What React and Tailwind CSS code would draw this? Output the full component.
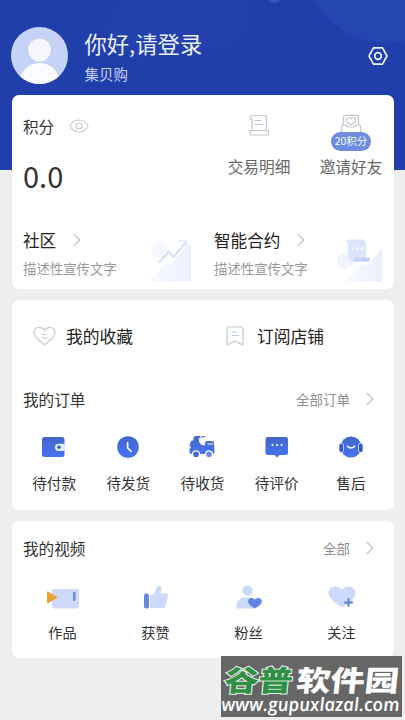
const wallet = (
  <svg width="26" height="24" viewBox="0 0 26 24">
    <rect x="1" y="2" width="22.5" height="20" rx="2.5" fill="url(#blue)" />
    <rect x="14" y="8.7" width="11" height="7.2" rx="3.6" fill="#e3ebff" />
    <circle cx="18" cy="12.3" r="1.7" fill="#3157d2" />
  </svg>
)

const clock = (
  <svg width="26" height="24" viewBox="0 0 26 24">
    <circle cx="13" cy="12" r="10.8" fill="url(#blue)" />
    <path d="M12.6 7.5v5.4l3.6 3.4" fill="none" stroke="#eef3ff" strokeWidth="1.7" strokeLinecap="round" strokeLinejoin="round" />
  </svg>
)

const truck = (
  <svg width="28" height="24" viewBox="0 0 28 24">
    <path d="M2.5 7.5a2 2 0 0 1 2-2h1V3.500A2.500 2.500 0 0 1 8 1h4l3 9.500 2-.5V8a2 2 0 0 1 2-2h5a2 2 0 0 1 2 2l.5 9a2 2 0 0 1-2 2H3.500a2 2 0 0 1-2-2v-3l1.500-1.500-1.500-1.800z" fill="url(#blue)" />
    <path d="M10.500 3c.3 3.500 1.500 6.500 3.800 7.200C16 8.500 16 5 16 2.200z" fill="#f3f6ff" />
    <path d="M13 1.700h4.200" stroke="#5f82e4" strokeWidth="1.300" />
    <path d="M19.500 9h5.700" stroke="#dbe5ff" strokeWidth="1.300" />
    <circle cx="8" cy="19.300" r="3.500" fill="#4268df" stroke="#fff" strokeWidth="1.300" />
    <circle cx="21" cy="19.300" r="3.500" fill="#6c8cea" stroke="#fff" strokeWidth="1.300" />
  </svg>
)

const message = (
  <svg width="26" height="24" viewBox="0 0 26 24">
    <path d="M4 2h17.500A2.500 2.500 0 0 1 24 4.500v13a2.500 2.500 0 0 1-2.500 2.500h-6L13 22.500 10.500 20H4a2.500 2.500 0 0 1-2.500-2.500v-13A2.500 2.500 0 0 1 4 2z" fill="url(#blue)" />
    <g fill="#eef3ff">
      <circle cx="8.500" cy="10" r="1.100" />
      <circle cx="13" cy="10" r="1.100" />
      <circle cx="17.500" cy="10" r="1.100" />
    </g>
  </svg>
)

const service = (
  <svg width="26" height="24" viewBox="0 0 26 24">
    <circle cx="13" cy="12" r="10.500" fill="url(#blue)" />
    <rect x="1" y="8.300" width="4.500" height="9" rx="2" fill="#3157cc" stroke="#e5ecff" strokeWidth=".8" />
    <rect x="20.500" y="8.300" width="4.500" height="9" rx="2" fill="#3157cc" stroke="#e5ecff" strokeWidth=".8" />
    <path d="M9.500 11.200c1.500 2.300 5.500 2.300 7 0" fill="none" stroke="#e5ecff" strokeWidth="1.700" strokeLinecap="round" />
  </svg>
)

const works = (
  <svg width="34" height="26" viewBox="0 0 34 26">
    <rect x="6" y="5" width="27" height="19.500" rx="2" fill="#cdd9fa" />
    <rect x="27" y="8" width="2.500" height="9" rx="1" fill="#6b8add" />
    <path d="M1.500 7.800l9.500 5.600-9.500 5.600z" fill="#eba030" stroke="#eba030" strokeLinejoin="round" />
  </svg>
)

const like = (
  <svg width="26" height="26" viewBox="0 0 26 26">
    <rect x="1" y="9.500" width="5" height="15" rx="2" fill="#6b87dc" />
    <path d="M7 11.500c3-.8 5-3 6.200-6.800C14 1 18.500 1.200 18.400 5c0 1.800-.5 3-1 4.500h5.500c1.700 0 2.200 1.200 1.900 2.500l-2.200 10c-.4 1.500-1.200 2-2.500 2H7z" fill="#cdd9fa" />
  </svg>
)

const fans = (
  <svg width="28" height="26" viewBox="0 0 28 26">
    <circle cx="12.500" cy="6.500" r="5.200" fill="#cdd9fa" />
    <path d="M1 24.500c0-7 4-11.300 10-11.300 4.500 0 8 2 9.500 5v6.300z" fill="#cdd9fa" />
    <path d="M20 24.500c-4-2.600-6.900-4.700-6.900-7.300 0-3.200 4.500-4.700 6.900-1.600 2.400-3.100 6.900-1.600 6.900 1.600 0 2.600-2.900 4.700-6.900 7.300z" fill="#6285e8" />
  </svg>
)

const follow = (
  <svg width="28" height="26" viewBox="0 0 28 26">
    <path d="M14 23.500C7 18.500.500 14.500.500 9c0-7 9-9 13.500-3.300C18.500 0 27.500 2 27.500 9c0 5.500-6.500 9.500-13.500 14.500z" fill="#cdd9fa" />
    <path d="M20.500 14.200v8.600M16.200 18.500h8.600" stroke="#6b8ae0" strokeWidth="2.300" />
  </svg>
)

const orders = [
  { label: '待付款', icon: wallet },
  { label: '待发货', icon: clock },
  { label: '待收货', icon: truck },
  { label: '待评价', icon: message },
  { label: '售后', icon: service },
]

const videos = [
  { label: '作品', icon: works },
  { label: '获赞', icon: like },
  { label: '粉丝', icon: fans },
  { label: '关注', icon: follow },
]

function Arrow() {
  return (
    <svg width="8" height="14" viewBox="0 0 8 14" fill="none" stroke="#c4c4c4" strokeWidth="1.2">
      <path d="M.8 1l6 6-6 6" />
    </svg>
  )
}

function Header() {
  return (
    <header className="flex h-[95px] shrink-0 pl-[11px] pr-[17px] pt-[27px]">
      <svg width="57" height="57" viewBox="0 0 57 57">
        <defs>
          <clipPath id="avatar">
            <circle cx="28.500" cy="28.500" r="28.500" />
          </clipPath>
        </defs>
        <g clipPath="url(#avatar)">
          <rect width="57" height="57" fill="#c6d3f9" />
          <circle cx="28.500" cy="56.500" r="20.500" fill="#fbfcff" />
          <circle cx="28.500" cy="23" r="12.500" fill="#c3ccee" />
          <circle cx="28.500" cy="23" r="11.500" fill="#f6f7fd" />
        </g>
      </svg>
      <div className="ml-[16.500px] flex-1 pt-[5px] text-[#e9f0ff]">
        <h1 className="text-[22.300px] leading-[22px]">你好,请登录</h1>
        <p className="mt-[12px] text-[14.500px] leading-4 text-[#c5d2fb]">集贝购</p>
      </div>
      <svg className="mt-[19px]" width="20" height="20" viewBox="0 0 20 20" fill="none" stroke="#eaf2ff" strokeWidth="1.700">
        <path d="M5.500 1.800h9L19 10l-4.500 8.200h-9L1 10z" strokeLinejoin="round" />
        <circle cx="10" cy="10" r="3.300" />
      </svg>
    </header>
  )
}

function PointsCard() {
  return (
    <section className="h-[194px] rounded-[7px] bg-white">
      <div className="flex h-[134px] pl-[11px]">
        <div className="flex-1 pt-[22px]">
          <div className="flex items-center gap-[15px]">
            <span className="text-[15.6px] leading-[18px] text-[#333]">积分</span>
            <svg width="20" height="14" viewBox="0 0 20 14" fill="none" stroke="#c9c9cb" strokeWidth="1.100">
              <path d="M.8 7C3 3.200 6.200 1 10 1s7 2.200 9.200 6c-2.200 3.800-5.400 6-9.200 6S3 10.800.8 7z" />
              <circle cx="10" cy="7" r="3" />
            </svg>
          </div>
          <div className="mt-[25px] text-[29px] leading-[30px] text-[#333]">0.0</div>
        </div>
        <div className="flex w-[92px] flex-col items-center pt-[19px]">
          <svg width="22" height="23" viewBox="0 0 22 23" fill="none" stroke="#c3c7cf" strokeWidth="1.200">
            <path d="M4 16.500V5H2.200c-.8-3 1.300-3.500 2.300-3.500h12c1.500 0 2 1 2 2v13" />
            <path d="M2 16.500h18.500v4.500H2z" />
            <path d="M6.500 6.500h7M6.500 10.500h9.500" stroke="#b9c2d6" />
          </svg>
          <span className="mt-[21px] text-[15.700px] leading-[18px] text-[#666]">交易明细</span>
        </div>
        <div className="relative mr-[-3px] flex w-[92px] flex-col items-center pt-[19px]">
          <svg width="22" height="23" viewBox="0 0 22 23" fill="none" stroke="#c3c7d2" strokeWidth="1.200">
            <path d="M3.500 11V3.500c0-1.500.8-2.200 2-2.200h11c1.200 0 2 .7 2 2.200V11" />
            <path d="M11 11C8 9 6.300 7.500 6.300 5.800c0-2.300 3.300-2.800 4.700-.8 1.400-2 4.700-1.500 4.700.8C15.700 7.500 14 9 11 11z" />
            <path d="M3.500 11c-1.500 0-2 .5-2 1.500V20h19v-7.500c0-1-.5-1.500-2-1.500-2.500 0-3 2-5 2h-5c-2 0-2.500-2-5-2z" />
          </svg>
          <span className="absolute top-[37px] flex h-[19px] w-10 items-center justify-center rounded-full bg-[#6d8be0] text-[10.500px] leading-none text-white">
            20积分
          </span>
          <span className="mt-[21px] text-[15.700px] leading-[18px] text-[#666]">邀请好友</span>
        </div>
      </div>
      <div className="flex gap-[7px] pl-[11px] pr-[12px]">
        <Promo title="社区" gap="gap-[17px]">
          <svg width="46" height="46" viewBox="0 0 46 46">
            <circle cx="15" cy="13" r="9" fill="#f5f8ff" />
            <path d="M3 45l18-19 4 2L46 5v40z" fill="url(#pale)" />
            <path d="M13.500 26l10-11 5 5L41 5" fill="none" stroke="#d9e2f8" strokeWidth="2.500" />
            <path d="M33 4h8.500v8" fill="none" stroke="#e4eafa" strokeWidth="1.500" />
          </svg>
        </Promo>
        <Promo title="智能合约" gap="gap-[17px]">
          <svg width="46" height="46" viewBox="0 0 46 46">
            <circle cx="9" cy="24" r="8" fill="#f0f4ff" />
            <path d="M8 45l18-18 4 2L46 11v34z" fill="url(#pale)" />
            <path d="M10 6c-1-2 1-3.500 3-3.500h13c2.500 0 4 1.500 4 4V24H16c-3 0-4-1.500-4-4V6z" fill="#dbe5fc" />
            <path d="M18 20.500h16v1.500c0 1.800-1 2.700-3 2.700H15c2-.7 3-2 3-4.200z" fill="#c4d2f5" />
            <path d="M16 11.500h2m2.500 0h2m2.500 0h2" stroke="#fff" strokeWidth="1.800" />
          </svg>
        </Promo>
      </div>
    </section>
  )
}

function Promo({ title, gap, children }) {
  return (
    <div className="flex flex-1 justify-between last:pl-[8px] first:pr-[8px]">
      <div className="w-[94px] shrink-0 pt-[1px]">
        <div className={`flex items-center ${gap}`}>
          <span className="text-[16.600px] leading-5 text-[#222]">{title}</span>
          <Arrow />
        </div>
        <p className="mt-[10px] whitespace-nowrap text-[13.400px] leading-4 text-[#999]">描述性宣传文字</p>
      </div>
      <div className="mt-[8px] shrink-0">{children}</div>
    </div>
  )
}

function CardTitle({ title, more }) {
  return (
    <div className="flex h-5 items-center pl-[11px] pr-[20px]">
      <h2 className="flex-1 text-[15.600px] leading-5 text-[#333]">{title}</h2>
      <span className="mr-[16px] text-[13.500px] leading-5 text-[#8f8f8f]">{more}</span>
      <Arrow />
    </div>
  )
}

function OrderCard() {
  return (
    <section className="h-[210px] rounded-[7px] bg-white pt-[24px]">
      <div className="flex h-6 items-center text-[16.800px] leading-6 text-[#222]">
        <div className="flex w-[192px] items-center gap-[10px] pl-[21px]">
          <svg width="23" height="20" viewBox="0 0 23 20" fill="none" stroke="#c3c7cf" strokeWidth="1.200">
            <path d="M11.500 18.800C5 13.500 1 10.500 1 6.500 1 1 8 -.5 11.500 4.200 15-.500 22 1 22 6.500c0 4-4 7-10.500 12.300z" />
            <path d="M8.500 8.500h5M8.500 12h7" stroke="#b8c8dc" />
          </svg>
          我的收藏
        </div>
        <div className="flex items-center gap-[13px] pl-[22px]">
          <svg width="18" height="20" viewBox="0 0 18 20" fill="none" stroke="#c3c7cf" strokeWidth="1.200">
            <path d="M1 19V3c0-1.300.7-2 2-2h12c1.300 0 2 .7 2 2v16l-8-4z" strokeLinejoin="round" />
            <path d="M5.500 6h5.500M5.500 9.500h7.500" stroke="#b0cbe6" />
          </svg>
          订阅店铺
        </div>
      </div>
      <div className="mt-[41px]">
        <CardTitle title="我的订单" more="全部订单" />
      </div>
      <div className="mt-[26px] grid grid-cols-5 pl-[5px] pr-[6px]">
        {orders.map(item => (
          <div key={item.label} className="flex flex-col items-center">
            {item.icon}
            <span className="mt-[14px] text-[14.600px] leading-5 text-[#333]">{item.label}</span>
          </div>
        ))}
      </div>
    </section>
  )
}

function VideoCard() {
  return (
    <section className="h-[137px] rounded-[7px] bg-white pt-[17px]">
      <CardTitle title="我的视频" more="全部" />
      <div className="mt-[26px] grid grid-cols-4 pl-[4px] pr-[6px]">
        {videos.map(item => (
          <div key={item.label} className="flex flex-col items-center">
            {item.icon}
            <span className="mt-[12px] text-[14.200px] leading-5 text-[#333]">{item.label}</span>
          </div>
        ))}
      </div>
    </section>
  )
}

function Watermark() {
  return (
    <div className="absolute left-[221px] top-[656px] h-[61px] w-[181px] bg-[#666]">
      <svg width="181" height="61" viewBox="0 0 181 61">
        <g fontFamily="Noto Sans CJK SC" fontWeight="900" fontSize="28.500" transform="translate(0 34.500) skewX(-6) scale(1.200 1)">
          <text x="2" y="0" fill="#2f8f45" stroke="#e6f3e6" strokeWidth="2" paintOrder="stroke">谷普</text>
          <text x="62" y="0" fill="#fff">软件园</text>
        </g>
        <g transform="translate(0 55) skewX(6)">
          <text x="1" y="0" textLength="178" lengthAdjust="spacingAndGlyphs" fill="#fff" fontFamily="Open Sans" fontStyle="italic" fontWeight="600" fontSize="18.500">
            www.gupuxlazal.com
          </text>
        </g>
      </svg>
    </div>
  )
}

export default function App() {
  return (
    <div className="relative h-[720px] w-[405px] overflow-hidden bg-[#eeeeee] font-['Noto_Sans_CJK_SC',sans-serif]">
      <svg className="absolute left-0 top-0" width="405" height="170" viewBox="0 0 405 170">
        <defs>
          <linearGradient id="blue" x1="0" y1="0" x2="0" y2="1">
            <stop offset="0" stopColor="#4367c6" />
            <stop offset="1" stopColor="#4672f5" />
          </linearGradient>
          <linearGradient id="pale" x1="0" y1="0" x2="1" y2="0">
            <stop offset="0" stopColor="#fafbff" />
            <stop offset="1" stopColor="#e9effd" />
          </linearGradient>
        </defs>
        <rect width="405" height="170" fill="#213fab" />
        <circle cx="387" cy="-40" r="83" fill="#2545b1" />
        <circle cx="205" cy="4" r="46" fill="#2340ac" />
        <circle cx="274" cy="-5" r="8" fill="#3553b8" />
        <circle cx="140" cy="28" r="32" fill="#2241ad" />
      </svg>
      <div className="relative flex h-full flex-col">
        <Header />
        <main className="flex flex-col gap-[11px] pl-[12px] pr-[11px]">
          <PointsCard />
          <OrderCard />
          <VideoCard />
        </main>
      </div>
      <Watermark />
    </div>
  )
}
